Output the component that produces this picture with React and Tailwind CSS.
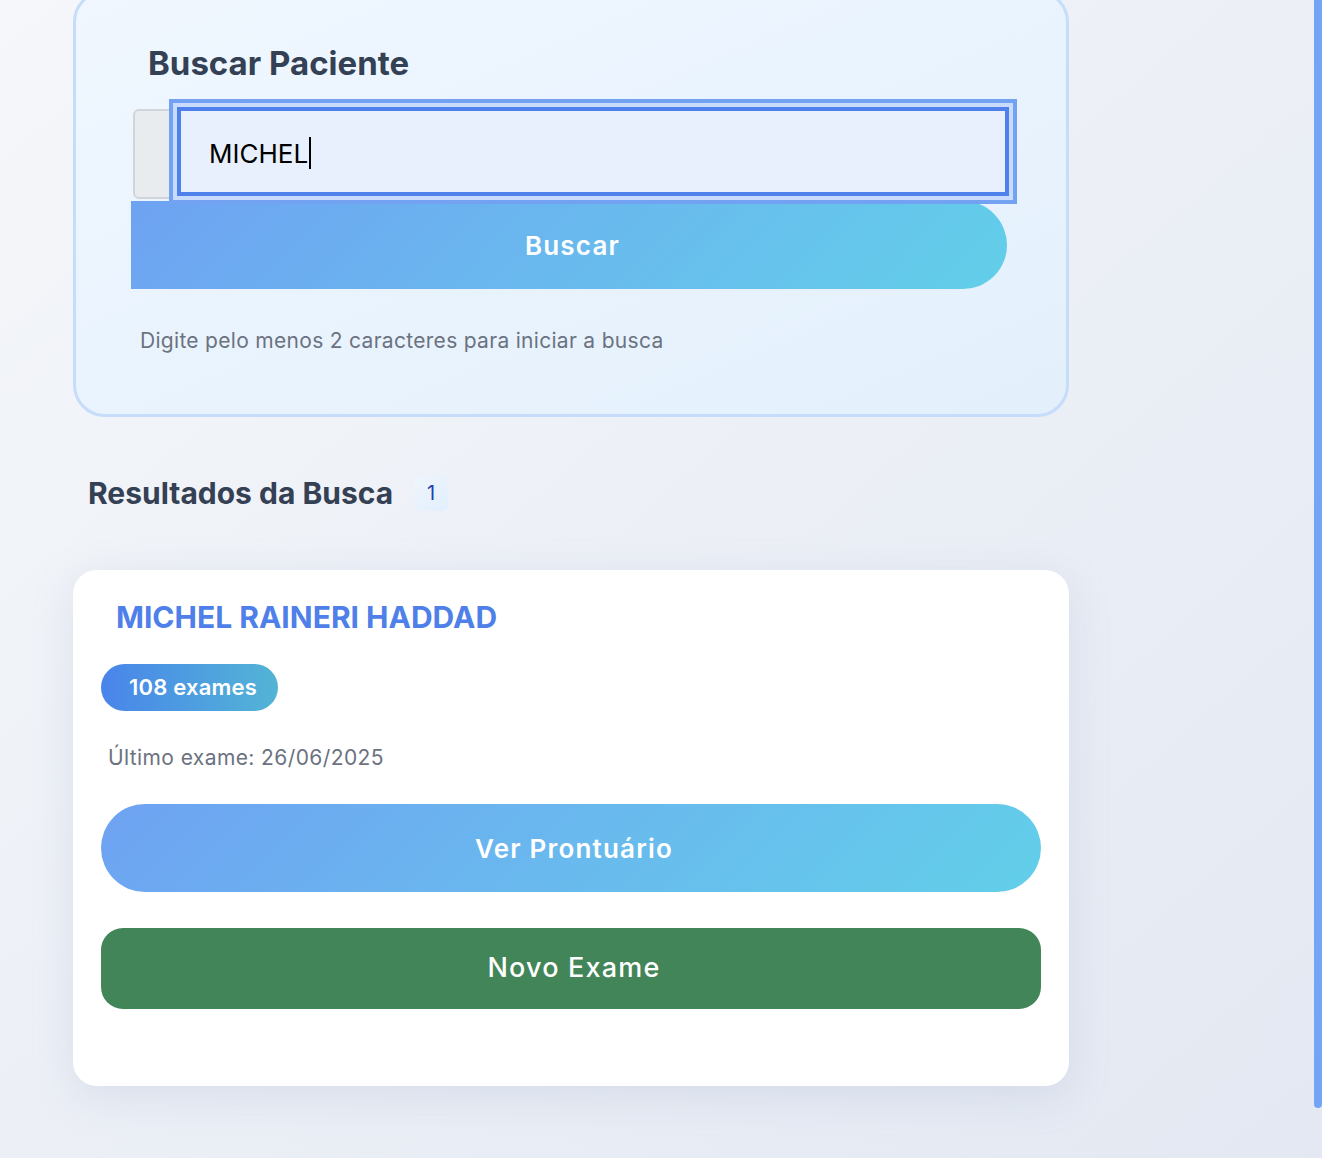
import React from 'react';

// Patient search page: search card + results list

function SearchCard() {
    return (
        <div className="mt-[-10px] w-[996px] rounded-[32px] border-[3px] border-[#c6dcfb] bg-linear-to-br from-[#f0f7ff] to-[#e3f0fc] pt-[51px] pb-[59px] pl-[55px] pr-[57px]">
            <h2 className="ml-[17px] text-[33px] leading-[38px] font-bold text-[#344054]">Buscar Paciente</h2>
            <div className="mt-[25px] mb-[2px] flex items-start">
                <div className="mt-[2px] ml-[2px] h-[90px] w-[44px] shrink-0 rounded-l-[6px] border-2 border-[#d1d5da] bg-[#e9ecef]" />
                <div className="relative z-10 flex h-[89px] w-[832px] items-center border-[4px] border-[#5080ec] bg-[#e8f0fd] pl-[28px] pt-[3px] shadow-[0_0_0_4px_#c9dbfa,0_0_0_8px_#74a2f3]">
                    <span className="text-[26px] text-black">MICHEL</span>
                    <span className="ml-[1px] h-[32px] w-[2px] bg-black" />
                </div>
            </div>
            <button className="block h-[88px] w-[876px] rounded-r-full bg-linear-135 from-[#6ea2f2] to-[#62cfe9] pl-[7px] text-[26px] font-semibold tracking-[1.2px] text-white">
                Buscar
            </button>
            <p className="mt-[38px] ml-[9px] text-[21px] leading-[28px] tracking-[0.3px] text-[#6b7280]">Digite pelo menos 2 caracteres para iniciar a busca</p>
        </div>
    );
}

function PatientCard({ name, exams, lastExam }) {
    return (
        <div className="w-[996px] rounded-[24px] bg-white pt-[29px] pb-[77px] px-[28px] shadow-[0_10px_40px_rgba(148,163,200,0.22)]">
            <h3 className="ml-[15px] text-[30px] leading-[36px] font-bold text-[#4f7fe9]">{name}</h3>
            <span className="mt-[29px] inline-flex h-[47px] items-center rounded-full bg-linear-to-r from-[#4a84ea] to-[#53b4d5] pl-[28px] pr-[21px] text-[22px] font-semibold tracking-[0.2px] text-white">
                {exams} exames
            </span>
            <p className="mt-[33px] ml-[7px] text-[21px] leading-[28px] tracking-[0.4px] text-[#6b7280]">Último exame: {lastExam}</p>
            <button className="mt-[32px] block h-[88px] w-full rounded-full bg-linear-135 from-[#6ea2f2] to-[#62cfe9] pl-[6px] text-[26px] font-semibold tracking-[1.2px] text-white">
                Ver Prontuário
            </button>
            <button className="mt-[36px] block h-[81px] w-full rounded-[22px] bg-[#418558] pl-[6px] text-[27px] font-medium tracking-[1.2px] text-white">
                Novo Exame
            </button>
        </div>
    );
}

export default function App() {
    return (
        <div className="flex min-h-[1158px] w-full overflow-hidden bg-linear-to-br from-[#f5f7fa] to-[#e3e8f2] font-['Inter',sans-serif]">
            <main className="flex-1 pl-[73px]">
                <SearchCard />
                <div className="mt-[58px] ml-[15px] flex items-center">
                    <h2 className="text-[30px] leading-[36px] font-bold text-[#344054]">Resultados da Busca</h2>
                    <span className="ml-[21px] flex h-[35px] w-[34px] items-center justify-center rounded-[6px] bg-linear-to-br from-[#eef5fc] to-[#e2effd] text-[20px] text-[#1e40af]">1</span>
                </div>
                <div className="mt-[59px]">
                    <PatientCard name="MICHEL RAINERI HADDAD" exams={108} lastExam="26/06/2025" />
                </div>
            </main>
            <div className="h-[1108px] w-[8px] shrink-0 rounded-b-[4px] bg-[#74a4f6]" />
        </div>
    );
}
